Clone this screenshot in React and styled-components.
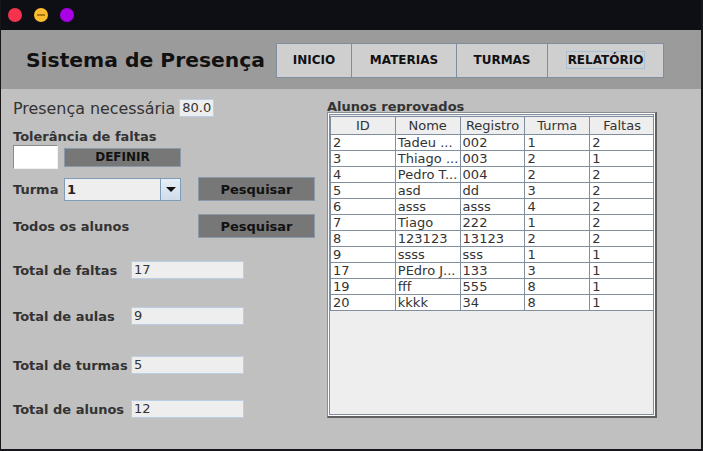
import React from 'react';
import styled, { createGlobalStyle } from 'styled-components';

const GlobalStyle = createGlobalStyle`
  html, body {
    margin: 0;
    padding: 0;
    background: #16161b;
    font-family: "DejaVu Sans", "Liberation Sans", sans-serif;
  }
`;

const Window = styled.div`
  width: 700px;
  height: 449px;
  margin-left: 1px;
  display: flex;
  flex-direction: column;
  background: #c0c0c0;
  overflow: hidden;
`;

const TitleBar = styled.div`
  height: 30px;
  background: #0e0f14;
  display: flex;
  align-items: center;
  gap: 12px;
  padding-left: 7px;
  flex-shrink: 0;
`;

const Light = styled.span`
  width: 14px;
  height: 14px;
  border-radius: 50%;
  background: ${p => p.color};
  display: flex;
  align-items: center;
  justify-content: center;
`;

const Dash = styled.span`
  width: 8px;
  height: 2px;
  background: #a67a10;
`;

const Header = styled.div`
  height: 59px;
  background: #9b9b9b;
  display: flex;
  align-items: center;
  padding-left: 25px;
  flex-shrink: 0;
`;

const Title = styled.h1`
  width: 251px;
  margin: 0;
  font-size: 20.3px;
  font-weight: bold;
  color: #111;
  white-space: nowrap;
`;

const NavGroup = styled.div`
  display: flex;
  margin-top: 1px;
`;

const NavButton = styled.button`
  width: ${p => p.w}px;
  height: 35px;
  background: #cfcfcf;
  border: 1px solid #7f8fa0;
  margin-left: -1px;
  font-family: inherit;
  font-size: 12px;
  font-weight: bold;
  color: #111;
  display: flex;
  align-items: center;
  justify-content: center;
  padding: 0;
`;

const Focus = styled.span`
  border: 1px solid #a8c0d8;
  padding: 1px 1px;
  line-height: 14px;
`;

const Content = styled.div`
  display: flex;
  flex: 1;
  padding-left: 12px;
`;

const LeftPanel = styled.div`
  width: 314px;
  display: flex;
  flex-direction: column;
`;

const Row = styled.div`
  display: flex;
  align-items: center;
  height: ${p => p.h || 24}px;
  margin-top: ${p => p.mt || 0}px;
`;

const BigLabel = styled.span`
  font-size: 15.9px;
  color: #333;
  margin-right: 4px;
  white-space: nowrap;
`;

const Label = styled.span`
  font-size: 13px;
  font-weight: bold;
  color: #333;
  width: ${p => (p.w ? `${p.w}px` : 'auto')};
  white-space: nowrap;
  flex-shrink: 0;
`;

const Field = styled.div`
  width: ${p => p.w}px;
  height: 18px;
  box-sizing: border-box;
  background: #eeeeee;
  border: 1px solid #b8cfe5;
  font-size: 13px;
  color: #333;
  line-height: 16px;
  padding-left: 2px;
`;

const WhiteField = styled.div`
  width: 45px;
  height: 24px;
  box-sizing: border-box;
  background: #fff;
  border-top: 1px solid #8a8a8a;
  border-left: 1px solid #8a8a8a;
  border-bottom: 1px solid #f0f0f0;
  border-right: 1px solid #f0f0f0;
  margin-right: 6px;
`;

const DarkButton = styled.button`
  width: 117px;
  height: ${p => p.h}px;
  background: #777;
  border: 1px solid #8a9aab;
  font-family: inherit;
  font-size: ${p => p.fs}px;
  font-weight: bold;
  color: #111;
  padding: 0;
  margin-left: ${p => p.ml || 0}px;
`;

const Combo = styled.div`
  width: 117px;
  height: 23px;
  box-sizing: border-box;
  border: 1px solid #7f9db9;
  background: #eeeeee;
  display: flex;
`;

const ComboText = styled.div`
  flex: 1;
  font-size: 13px;
  font-weight: bold;
  color: #222;
  line-height: 21px;
  padding-left: 2px;
`;

const ComboArrow = styled.div`
  width: 19px;
  border-left: 1px solid #7f9db9;
  background: linear-gradient(#e6eef7, #cfdcea);
  display: flex;
  align-items: center;
  justify-content: center;
  &::after {
    content: '';
    border-left: 5px solid transparent;
    border-right: 5px solid transparent;
    border-top: 5px solid #111;
  }
`;

const RightPanel = styled.div`
  display: flex;
  flex-direction: column;
  margin-top: 10px;
`;

const TableLabel = styled.div`
  font-size: 13px;
  font-weight: bold;
  color: #333;
  height: 13px;
  line-height: 16px;
`;

const ScrollBox = styled.div`
  position: relative;
  z-index: 1;
  width: 330px;
  height: 306px;
  box-sizing: border-box;
  border-top: 1px solid #8c8c8c;
  border-left: 1px solid #8c8c8c;
  border-right: 2px solid #616161;
  border-bottom: 2px solid #616161;
  background: #fff;
  padding: 1px;
`;

const Viewport = styled.div`
  height: 100%;
  box-sizing: border-box;
  border: 1px solid #7f8fa0;
  background: #eeeeee;
  padding: 1px 0 0 0;
  overflow: hidden;
`;

const Table = styled.table`
  border-collapse: collapse;
  table-layout: fixed;
  width: 325px;
  font-size: 13px;
  color: #333;
`;

const Th = styled.th`
  font-weight: normal;
  background: #eeeeee;
  border: 1px solid #7f8fa0;
  height: 17px;
  padding: 0;
  text-align: center;
  line-height: 16px;
`;

const Td = styled.td`
  background: #fff;
  border: 1px solid #7f8fa0;
  height: 15px;
  padding: 0 2px;
  line-height: 15px;
  white-space: nowrap;
  overflow: hidden;
`;

const rows = [
  ['2', 'Tadeu ...', '002', '1', '2'],
  ['3', 'Thiago ...', '003', '2', '1'],
  ['4', 'Pedro T...', '004', '2', '2'],
  ['5', 'asd', 'dd', '3', '2'],
  ['6', 'asss', 'asss', '4', '2'],
  ['7', 'Tiago', '222', '1', '2'],
  ['8', '123123', '13123', '2', '2'],
  ['9', 'ssss', 'sss', '1', '1'],
  ['17', 'PEdro J...', '133', '3', '1'],
  ['19', 'fff', '555', '8', '1'],
  ['20', 'kkkk', '34', '8', '1'],
];

const totals = [
  ['Total de faltas', '17', 23],
  ['Total de aulas', '9', 28],
  ['Total de turmas', '5', 31],
  ['Total de alunos', '12', 26],
];

export default function App() {
  return (
    <>
      <GlobalStyle />
      <Window>
        <TitleBar>
          <Light color="#f4344f" />
          <Light color="#fdbb2f"><Dash /></Light>
          <Light color="#a900e6" />
        </TitleBar>
        <Header>
          <Title>Sistema de Presença</Title>
          <NavGroup>
            <NavButton w={76}>INICIO</NavButton>
            <NavButton w={106}>MATERIAS</NavButton>
            <NavButton w={92}>TURMAS</NavButton>
            <NavButton w={117}><Focus>RELATÓRIO</Focus></NavButton>
          </NavGroup>
        </Header>
        <Content>
          <LeftPanel>
            <Row h={18} mt={10}>
              <BigLabel>Presença necessária</BigLabel>
              <Field w={35}>80.0</Field>
            </Row>
            <Row h={16} mt={11}>
              <Label>Tolerância de faltas</Label>
            </Row>
            <Row mt={1}>
              <WhiteField />
              <DarkButton h={19} fs={12}>DEFINIR</DarkButton>
            </Row>
            <Row mt={8}>
              <Label w={51}>Turma</Label>
              <Combo>
                <ComboText>1</ComboText>
                <ComboArrow />
              </Combo>
              <DarkButton h={24} fs={13} ml={17}>Pesquisar</DarkButton>
            </Row>
            <Row mt={13}>
              <Label w={185}>Todos os alunos</Label>
              <DarkButton h={24} fs={13}>Pesquisar</DarkButton>
            </Row>
            {totals.map(([label, value, mt]) => (
              <Row key={label} h={18} mt={mt}>
                <Label w={118}>{label}</Label>
                <Field w={113}>{value}</Field>
              </Row>
            ))}
          </LeftPanel>
          <RightPanel>
            <TableLabel>Alunos reprovados</TableLabel>
            <ScrollBox>
              <Viewport>
                <Table>
                  <thead>
                    <tr>
                      {['ID', 'Nome', 'Registro', 'Turma', 'Faltas'].map(h => (
                        <Th key={h}>{h}</Th>
                      ))}
                    </tr>
                  </thead>
                  <tbody>
                    {rows.map(r => (
                      <tr key={r[0]}>
                        {r.map((c, i) => <Td key={i}>{c}</Td>)}
                      </tr>
                    ))}
                  </tbody>
                </Table>
              </Viewport>
            </ScrollBox>
          </RightPanel>
        </Content>
      </Window>
    </>
  );
}
